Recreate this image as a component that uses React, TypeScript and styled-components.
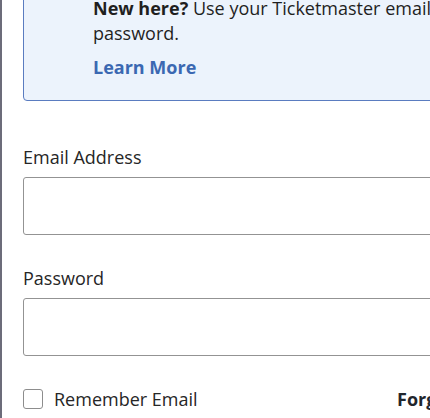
import React from 'react';
import styled, {createGlobalStyle} from 'styled-components';

const GlobalStyle = createGlobalStyle`
    html, body {
        margin: 0;
        padding: 0;
        background: #ffffff;
        overflow: hidden;
    }
    body {
        font-family: 'Open Sans', Lato, sans-serif;
        color: #262626;
    }
`;

const Page = styled.div`
    border-left: 2px solid #6c6c7a;
    height: 418px;
    box-sizing: border-box;
    padding: 0 0 0 21px;
    overflow: hidden;
`;

const Notice = styled.div`
    margin-top: -25px;
    width: 440px;
    background: #ecf3fc;
    border: 1px solid #5a7cc0;
    border-radius: 4px;
    padding: 20px 0 20px 69px;
    box-sizing: border-box;
`;

const NoticeText = styled.p`
    margin: 0;
    font-size: 18px;
    line-height: 25px;
    color: #1f1f1f;
    white-space: nowrap;

    b {
        font-weight: 700;
    }
`;

const LearnMore = styled.a`
    display: inline-block;
    margin-top: 9px;
    font-size: 18px;
    line-height: 25px;
    font-weight: 700;
    color: #3b68b2;
    text-decoration: none;
`;

const Field = styled.div`
    display: flex;
    flex-direction: column;
    gap: 8px;
    margin-top: ${p => p.$top}px;
`;

const Label = styled.label`
    font-size: 18px;
    line-height: 24px;
    color: #262626;
`;

const Input = styled.input`
    width: 440px;
    height: 58px;
    box-sizing: border-box;
    border: 1.5px solid #939393;
    border-radius: 3px;
    background: #fff;
    outline: none;
`;

const Row = styled.div`
    display: grid;
    grid-template-columns: 374px max-content;
    align-items: center;
    margin-top: 31px;
`;

const Remember = styled.label`
    display: flex;
    align-items: center;
    gap: 11px;
    white-space: nowrap;
`;

const Check = styled.span`
    width: 20px;
    height: 20px;
    box-sizing: border-box;
    border: 1.5px solid #8d8d8d;
    border-radius: 3px;
    flex-shrink: 0;
`;

const CheckLabel = styled.span`
    font-size: 18px;
    line-height: 24px;
    color: #262626;
`;

const Forgot = styled.a`
    font-size: 18px;
    line-height: 24px;
    font-weight: 700;
    color: #1f262d;
    white-space: nowrap;
    text-decoration: none;
`;

export default function App() {
    return (
        <>
            <GlobalStyle/>
            <Page>
                <Notice>
                    <NoticeText>
                        <b>New here?</b> Use your Ticketmaster email and
                    </NoticeText>
                    <NoticeText>password.</NoticeText>
                    <LearnMore href='#'>Learn More</LearnMore>
                </Notice>
                <Field $top={44}>
                    <Label>Email Address</Label>
                    <Input type='email'/>
                </Field>
                <Field $top={31}>
                    <Label>Password</Label>
                    <Input type='password'/>
                </Field>
                <Row>
                    <Remember>
                        <Check/>
                        <CheckLabel>Remember Email</CheckLabel>
                    </Remember>
                    <Forgot href='#'>Forgot Password?</Forgot>
                </Row>
            </Page>
        </>
    );
}
